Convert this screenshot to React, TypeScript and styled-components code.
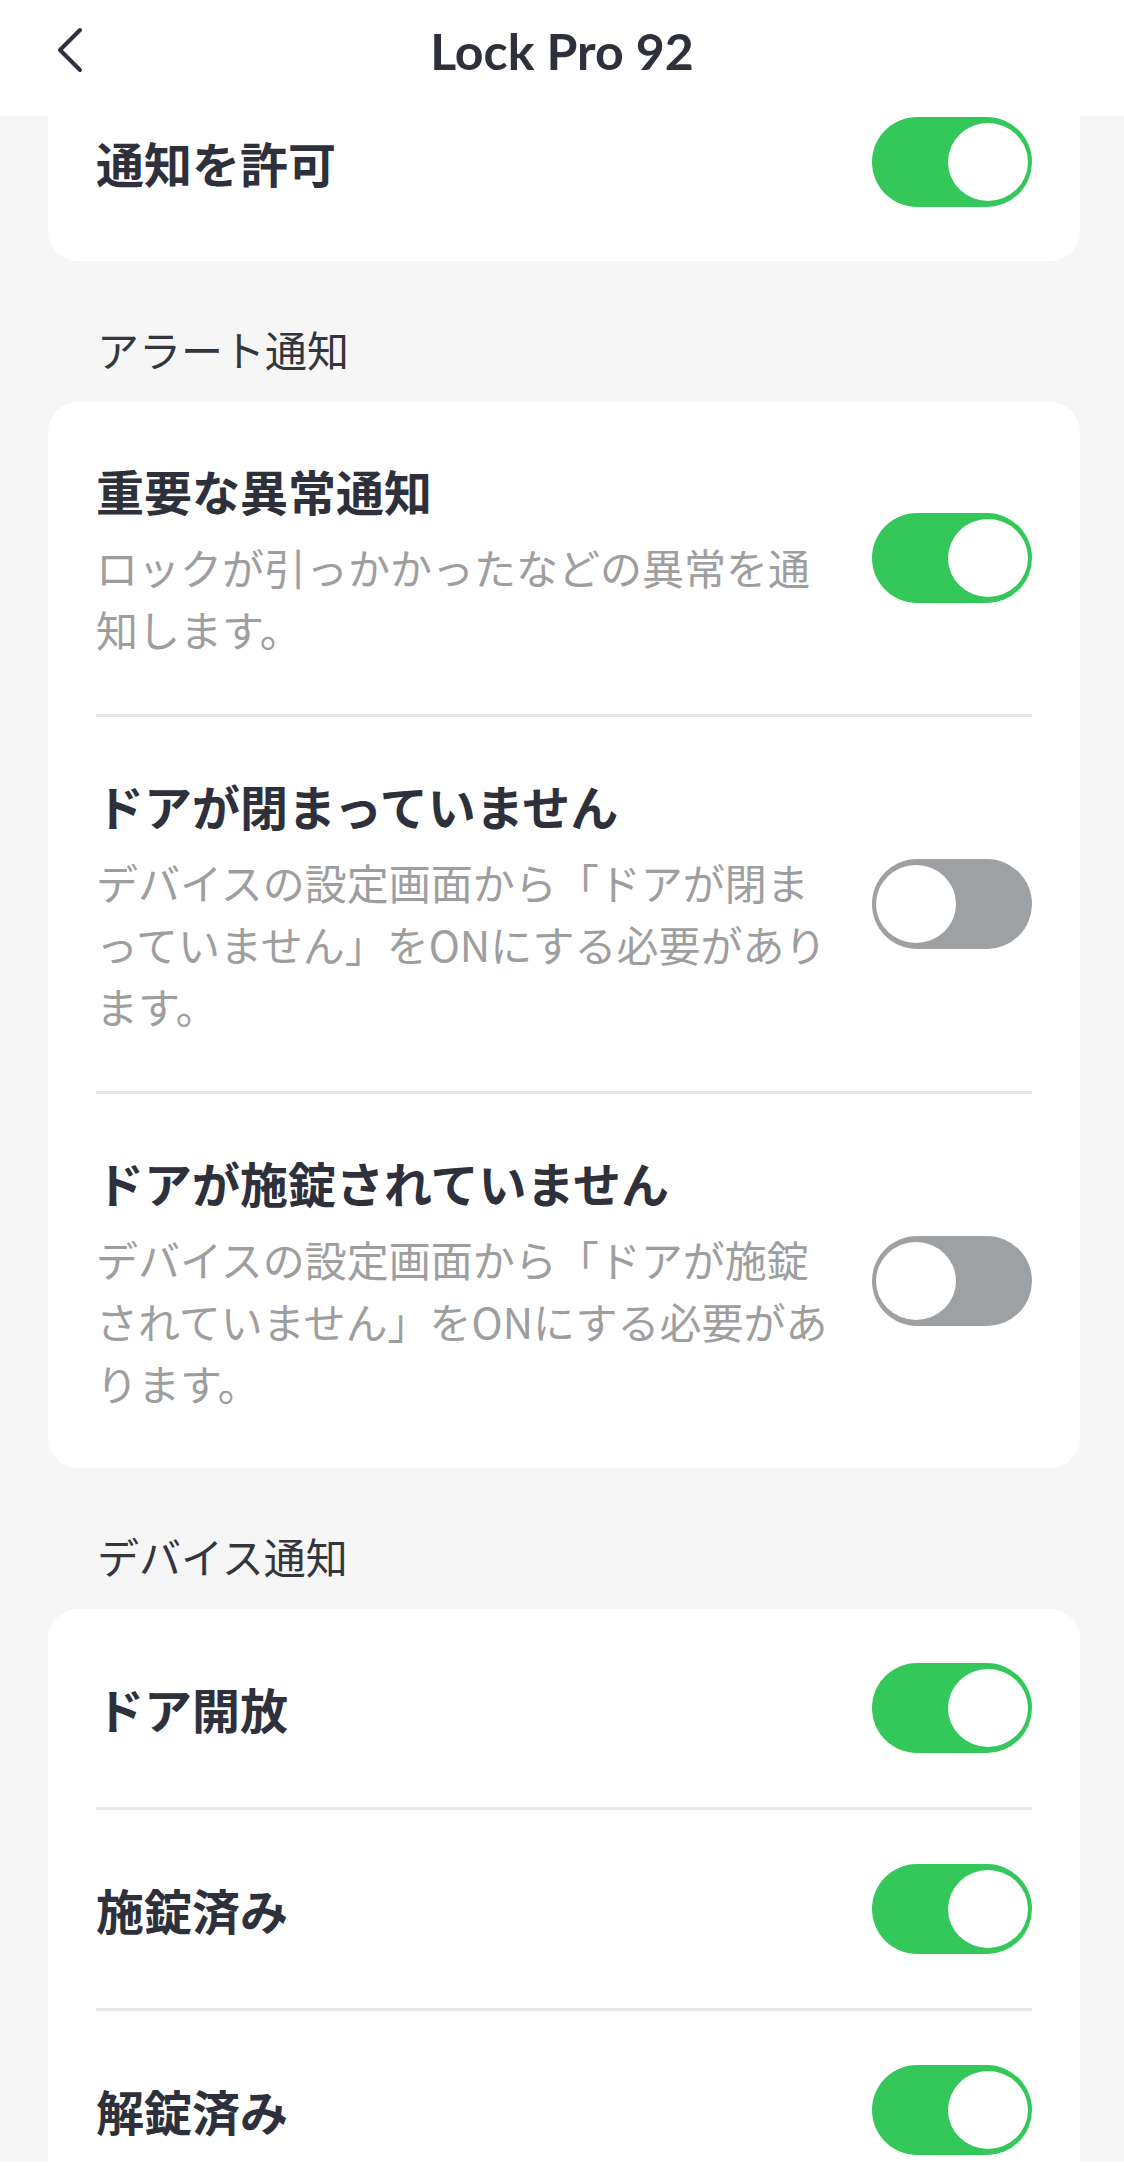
import React, { FC, useState } from 'react';
import styled, { createGlobalStyle } from 'styled-components';

interface SettingItem {
  key: string;
  title: string;
  desc?: string;
  on: boolean;
}

interface Section {
  key: string;
  label?: string;
  items: SettingItem[];
}

const sections: Section[] = [
  {
    key: 'main',
    items: [{ key: 'allow', title: '通知を許可', on: true }],
  },
  {
    key: 'alert',
    label: 'アラート通知',
    items: [
      { key: 'critical', title: '重要な異常通知', desc: 'ロックが引っかかったなどの異常を通知します。', on: true },
      {
        key: 'notClosed',
        title: 'ドアが閉まっていません',
        desc: 'デバイスの設定画面から「ドアが閉まっていません」をONにする必要があります。',
        on: false,
      },
      {
        key: 'notLocked',
        title: 'ドアが施錠されていません',
        desc: 'デバイスの設定画面から「ドアが施錠されていません」をONにする必要があります。',
        on: false,
      },
    ],
  },
  {
    key: 'device',
    label: 'デバイス通知',
    items: [
      { key: 'opened', title: 'ドア開放', on: true },
      { key: 'locked', title: '施錠済み', on: true },
      { key: 'unlocked', title: '解錠済み', on: true },
    ],
  },
];

const App: FC = () => {
  const [values, setValues] = useState<Record<string, boolean>>(() => {
    const init: Record<string, boolean> = {};
    sections.forEach((s) => s.items.forEach((i) => (init[i.key] = i.on)));
    return init;
  });

  const toggle = (key: string) => setValues((prev) => ({ ...prev, [key]: !prev[key] }));

  return (
    <>
      <GlobalStyle />
      <Screen>
        <Header>
          <BackButton aria-label="戻る">
            <svg width="28" height="46" viewBox="0 0 28 46" fill="none">
              <path d="M24 3 L4 23 L24 43" stroke="#2e303b" strokeWidth="4" strokeLinecap="round" strokeLinejoin="round" />
            </svg>
          </BackButton>
          <Title>Lock Pro 92</Title>
        </Header>
        <Scroller>
          <ScrollContent>
            {sections.map((section) => (
              <React.Fragment key={section.key}>
                {section.label && <SectionLabel>{section.label}</SectionLabel>}
                <Card>
                  {section.items.map((item) => (
                    <Row key={item.key}>
                      <RowText>
                        <RowTitle>{item.title}</RowTitle>
                        {item.desc && <RowDesc>{item.desc}</RowDesc>}
                      </RowText>
                      <Switch $on={values[item.key]} onClick={() => toggle(item.key)}>
                        <Knob $on={values[item.key]} />
                      </Switch>
                    </Row>
                  ))}
                </Card>
              </React.Fragment>
            ))}
          </ScrollContent>
        </Scroller>
        <BottomBar />
      </Screen>
    </>
  );
};
export default App;

const GlobalStyle = createGlobalStyle`
  html, body {
    margin: 0;
    padding: 0;
    background: #ffffff;
  }
  body {
    font-family: 'Noto Sans CJK JP', 'Noto Sans', sans-serif;
  }
  * {
    box-sizing: border-box;
  }
`;

const Screen = styled.div`
  display: flex;
  flex-direction: column;
  width: 1124px;
  height: 2183px;
  background: #f6f6f6;
`;

const Header = styled.header`
  position: relative;
  display: flex;
  justify-content: center;
  height: 116px;
  padding-top: 20px;
  background: #ffffff;
  flex-shrink: 0;
`;

const BackButton = styled.button`
  position: absolute;
  left: 56px;
  top: 27px;
  display: flex;
  padding: 0;
  border: none;
  background: none;
  cursor: pointer;
`;

const Title = styled.h1`
  margin: 0;
  height: 62px;
  line-height: 62px;
  font-family: Lato, 'Noto Sans', sans-serif;
  font-size: 50px;
  font-weight: 700;
  color: #2e303b;
`;

const Scroller = styled.main`
  flex: 1;
  overflow: hidden;
`;

const ScrollContent = styled.div`
  margin-top: -53px;
  display: flex;
  flex-direction: column;
`;

const SectionLabel = styled.div`
  margin: 58px 44px 23px 97px;
  line-height: 60px;
  font-size: 42px;
  color: #34363e;
`;

const Card = styled.section`
  margin: 0 44px 0 48px;
  background: #ffffff;
  border-radius: 30px;
`;

const Row = styled.div`
  display: flex;
  align-items: center;
  gap: 30px;
  margin: 0 48px;
  padding: 54px 0;

  & + & {
    border-top: 3px solid #e6e6e6;
  }
`;

const RowText = styled.div`
  flex: 1;
  display: flex;
  flex-direction: column;
  gap: 12px;
  min-width: 0;
`;

const RowTitle = styled.div`
  line-height: 68px;
  font-size: 48px;
  font-weight: 700;
  color: #2e303b;
`;

const RowDesc = styled.div`
  line-height: 62px;
  font-size: 42px;
  color: #9e9e9e;
  line-break: normal;
`;

const Switch = styled.button<{ $on: boolean }>`
  position: relative;
  flex-shrink: 0;
  width: 160px;
  height: 90px;
  padding: 0;
  border: none;
  border-radius: 45px;
  background: ${(p) => (p.$on ? '#34c759' : '#9ea1a4')};
  cursor: pointer;
`;

const Knob = styled.span<{ $on: boolean }>`
  position: absolute;
  top: 6px;
  left: ${(p) => (p.$on ? '76px' : '4px')};
  width: 80px;
  height: 78px;
  border-radius: 50%;
  background: #ffffff;
`;

const BottomBar = styled.div`
  height: 21px;
  flex-shrink: 0;
  background: #ffffff;
`;
